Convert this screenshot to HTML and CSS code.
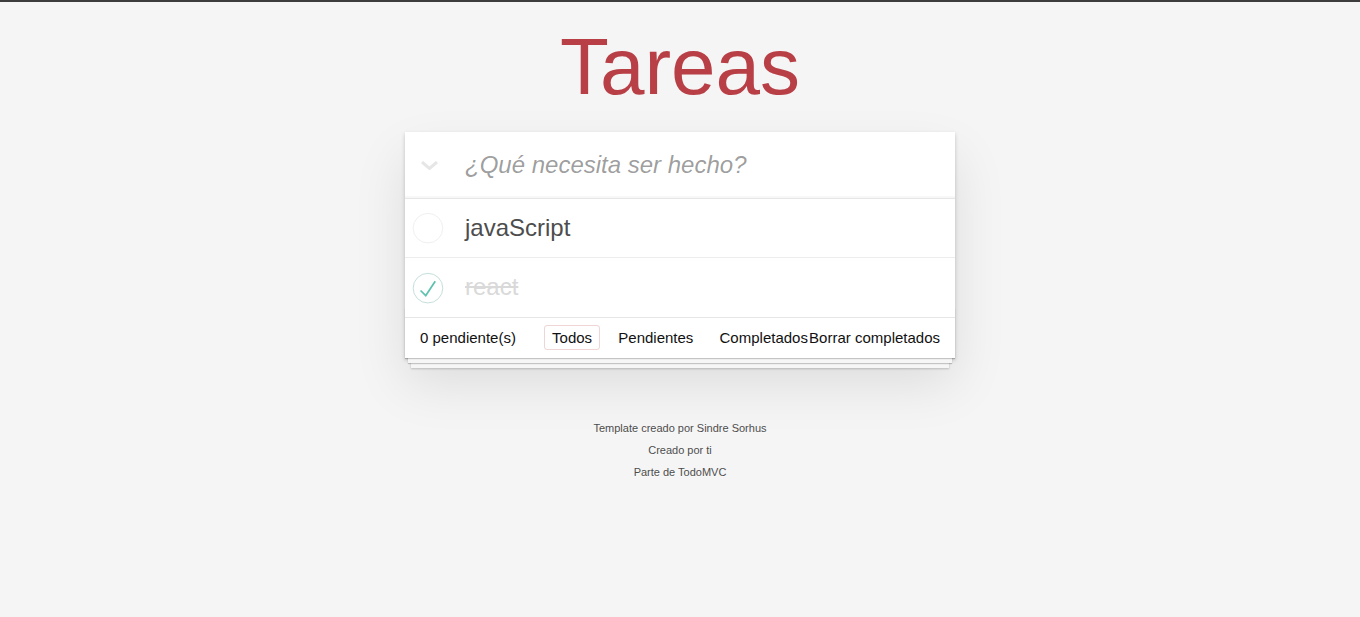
FILE: index.html
```html
<!DOCTYPE html>
<html lang="es">
<head>
<meta charset="utf-8">
<title>Tareas</title>
<link rel="stylesheet" href="styles.css">
</head>
<body>
<div class="page">
  <header class="title-bar"><h1 class="title">Tareas</h1></header>
  <section class="todoapp">
    <header class="header">
      <span class="toggle-all">
        <svg width="17" height="9" viewBox="0 0 17 9"><polyline points="1,1 8.5,7.5 16,1" fill="none" stroke="#e6e6e6" stroke-width="3"/></svg>
      </span>
      <input class="new-todo" placeholder="¿Qué necesita ser hecho?">
    </header>
    <section class="main">
      <ul class="todo-list">
        <li class="todo">
          <span class="toggle">
            <svg width="40" height="40" viewBox="-10 -18 100 135"><circle cx="50" cy="50" r="50" fill="none" stroke="#ededed" stroke-width="3"/></svg>
          </span>
          <label class="todo-label">javaScript</label>
        </li>
        <li class="todo completed">
          <span class="toggle">
            <svg width="40" height="40" viewBox="-10 -18 100 135"><circle cx="50" cy="50" r="50" fill="none" stroke="#bddad5" stroke-width="3"/><path fill="#5dc2af" d="M72 25L42 71 27 56l-4 4 20 20 34-52z"/></svg>
          </span>
          <label class="todo-label">react</label>
        </li>
      </ul>
    </section>
    <footer class="footer">
      <span class="todo-count"><strong>0</strong> pendiente(s)</span>
      <ul class="filters">
        <li><a class="selected" href="#/">Todos</a></li>
        <li><a href="#/active">Pendientes</a></li>
        <li><a href="#/completed">Completados</a></li>
      </ul>
      <span class="clear-wrap"><button class="clear-completed">Borrar completados</button></span>
    </footer>
  </section>
  <footer class="info">
    <p>Template creado por <a href="#">Sindre Sorhus</a></p>
    <p>Creado por <a href="#">ti</a></p>
    <p>Parte de <a href="#">TodoMVC</a></p>
  </footer>
</div>
</body>
</html>
```
FILE: styles.css
```css
html {
  margin: 0;
  padding: 0;
  border-top: 2px solid #3d3d3d;
  background: #f5f5f5;
}

body {
  margin: 0;
  padding: 0;
  font: 14px/1.4em "Liberation Sans", Arial, Helvetica, sans-serif;
  color: #111;
  background: #f5f5f5;
}

.page {
  max-width: 550px;
  min-width: 230px;
  margin: 0 auto;
  padding-bottom: 1px;
}

.title-bar {
  margin: 0;
  padding: 25px 0 0;
}

.title {
  margin: 0;
  font-size: 80px;
  line-height: 80px;
  font-weight: 400;
  text-align: center;
  color: #b83f45;
  text-rendering: optimizeLegibility;
}

.todoapp {
  background: #fff;
  margin: 25px 0 40px;
  position: relative;
  box-shadow: 0 2px 4px 0 rgba(0, 0, 0, 0.2), 0 25px 50px 0 rgba(0, 0, 0, 0.1);
}

.header {
  display: flex;
  align-items: center;
  box-shadow: inset 0 -2px 1px rgba(0, 0, 0, 0.03);
}

.toggle-all {
  width: 60px;
  flex: none;
  display: flex;
  padding-left: 16px;
  padding-top: 1px;
  box-sizing: border-box;
}

.new-todo {
  flex: 1;
  min-width: 0;
  margin: 0;
  border: none;
  outline: none;
  background: transparent;
  padding: 16px 16px 16px 0;
  font-family: inherit;
  font-size: 24px;
  line-height: 1.4em;
  color: inherit;
}

.new-todo::placeholder {
  font-style: italic;
  color: rgba(0, 0, 0, 0.4);
}

.main {
  border-top: 1px solid #e6e6e6;
}

.todo-list {
  margin: 0;
  padding: 0;
  list-style: none;
}

.todo {
  display: flex;
  align-items: center;
  font-size: 24px;
  border-bottom: 1px solid #ededed;
}

.todo:last-child {
  border-bottom: none;
}

.toggle {
  width: 40px;
  height: 40px;
  flex: none;
  display: flex;
}

.todo-label {
  flex: 1;
  padding: 15px 15px 15px 20px;
  line-height: 1.2;
  color: #4d4d4d;
  word-break: break-all;
}

.completed .todo-label {
  color: #d9d9d9;
  text-decoration: line-through;
}

.footer {
  position: relative;
  display: flex;
  padding: 10px 15px;
  height: 20px;
  line-height: 20px;
  font-size: 15px;
  border-top: 1px solid #e6e6e6;
  text-align: center;
}

.footer::before {
  content: "";
  position: absolute;
  right: 0;
  bottom: 0;
  left: 0;
  height: 50px;
  overflow: hidden;
  box-shadow: 0 1px 1px rgba(0, 0, 0, 0.2),
    0 8px 0 -3px #f6f6f6,
    0 9px 1px -3px rgba(0, 0, 0, 0.2),
    0 16px 0 -6px #f6f6f6,
    0 17px 2px -6px rgba(0, 0, 0, 0.2);
  pointer-events: none;
}

.todo-count {
  flex: 1 1 0;
  min-width: 0;
  text-align: left;
  white-space: nowrap;
}

.todo-count strong {
  font-weight: 400;
}

.filters {
  flex: none;
  margin: 0;
  padding: 0;
  list-style: none;
  white-space: nowrap;
}

.filters li {
  display: inline;
}

.filters a {
  color: inherit;
  margin: 3px;
  padding: 3px 7px;
  text-decoration: none;
  border: 1px solid transparent;
  border-radius: 3px;
}

.filters a.selected {
  border-color: rgba(175, 47, 47, 0.2);
}

.clear-wrap {
  flex: 1 1 0;
  min-width: 0;
  display: flex;
  justify-content: flex-end;
  position: relative;
}

.clear-completed {
  flex: none;
  margin: 0;
  padding: 0;
  border: 0;
  background: none;
  font: inherit;
  line-height: 20px;
  color: inherit;
  white-space: nowrap;
  cursor: pointer;
}

.info {
  margin: 65px auto 0;
  color: #4d4d4d;
  font-size: 11px;
  text-shadow: 0 1px 0 rgba(255, 255, 255, 0.5);
  text-align: center;
}

.info p {
  line-height: 1;
  margin: 11px 0;
}

.info a {
  color: inherit;
  text-decoration: none;
}
```
